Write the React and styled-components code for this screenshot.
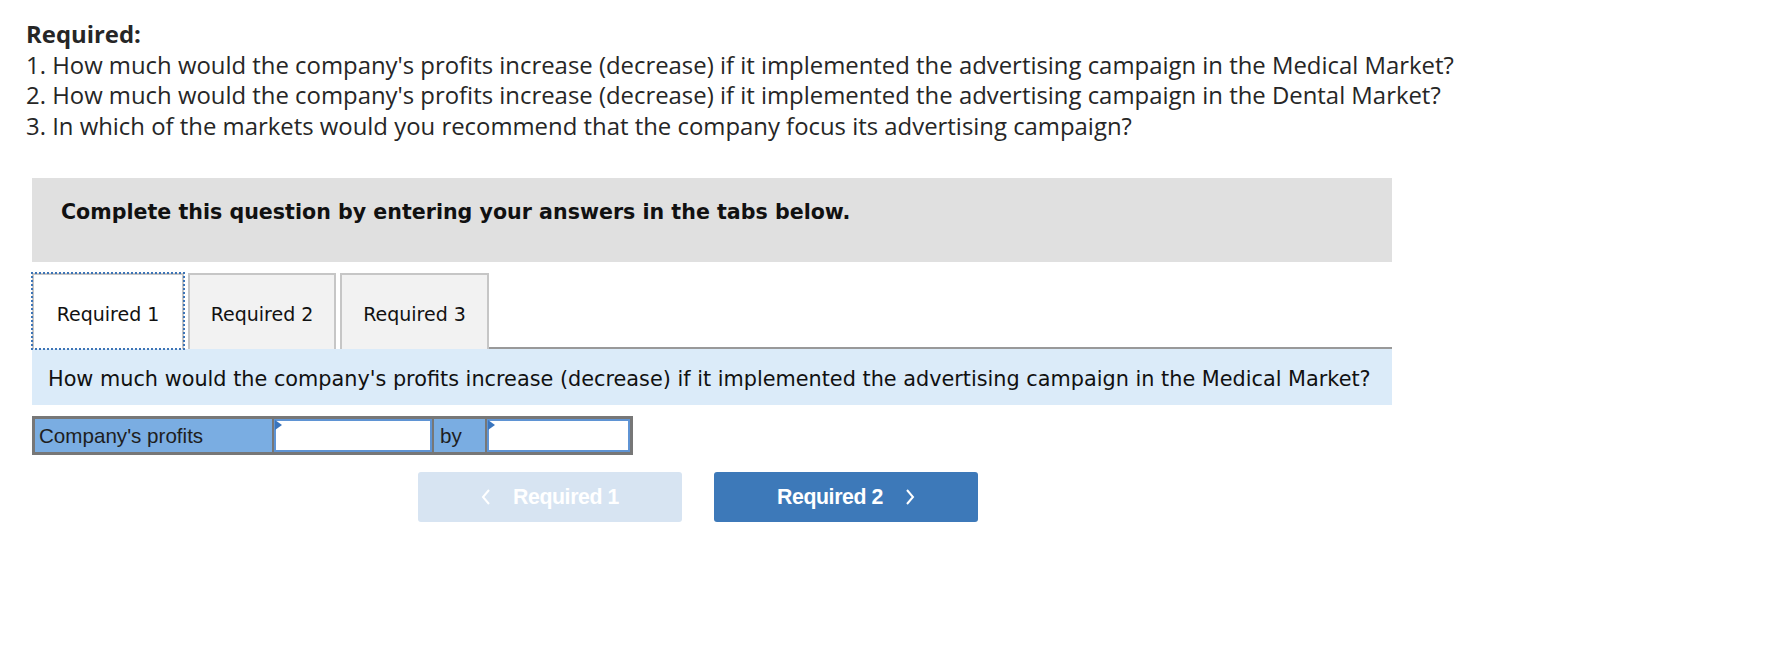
import React from 'react';
import styled, { createGlobalStyle } from 'styled-components';

const GlobalStyle = createGlobalStyle`
  body {
    margin: 0;
    background: #fff;
    color: #222;
  }
`;

const Page = styled.div`
  padding: 19px 0 40px 26px;
`;

const Instructions = styled.div`
  font-family: 'Open Sans', 'Noto Sans', sans-serif;
  font-size: 23.9px;
  line-height: 30.5px;
  color: #262626;
`;

const Title = styled.div`
  font-weight: 700;
`;

const Panel = styled.div`
  width: 1360px;
  margin: 37px 0 0 6px;
`;

const Banner = styled.div`
  background: #e0e0e0;
  height: 84px;
  box-sizing: border-box;
  padding: 22px 29px 0;
  font-family: 'DejaVu Sans', Verdana, sans-serif;
  font-weight: 700;
  font-size: 20.6px;
  line-height: 25px;
  color: #111;
`;

const TabStrip = styled.div`
  display: flex;
  align-items: stretch;
  gap: 4px;
  margin-top: 11px;
  height: 76px;
`;

const Tab = styled.button`
  box-sizing: border-box;
  width: ${(p) => p.$w}px;
  height: 76px;
  padding: 4px 0 0;
  margin: 0;
  border: 2px solid #c6c6c6;
  border-bottom: none;
  background: ${(p) => (p.$active ? '#fff' : '#f2f2f2')};
  outline: ${(p) => (p.$active ? '2px dotted #3d74b6' : 'none')};
  outline-offset: -1px;
  font-family: 'DejaVu Sans', Verdana, sans-serif;
  font-size: 19px;
  color: #111;
  display: flex;
  align-items: center;
  justify-content: center;
  cursor: pointer;
`;

const TabFiller = styled.div`
  flex: 1;
  border-bottom: 2px solid #999;
  margin-left: -4px;
`;

const QuestionBar = styled.div`
  background: #dbebf9;
  height: 56px;
  box-sizing: border-box;
  padding: 18px 16px 0;
  font-family: 'DejaVu Sans', Verdana, sans-serif;
  font-size: 20.8px;
  line-height: 25px;
  color: #111;
`;

const AnswerRow = styled.div`
  display: inline-flex;
  gap: 2px;
  margin-top: 11px;
  border: 3px solid #777;
  background: #777;
  height: 33px;
`;

const LabelCell = styled.div`
  width: ${(p) => p.$w}px;
  box-sizing: border-box;
  background: #7aade2;
  padding-left: ${(p) => p.$pad}px;
  font-family: 'Liberation Sans', Arial, sans-serif;
  font-size: 20.6px;
  line-height: 33px;
  color: #1e1e1e;
`;

const InputWrap = styled.div`
  position: relative;
  width: ${(p) => p.$w}px;
  box-sizing: border-box;
  background: #fff;
  border: 2px solid #5f94d4;
  &::before {
    content: '';
    position: absolute;
    left: -1px;
    top: -1px;
    border-left: 7px solid #3a75bd;
    border-top: 5px solid transparent;
    border-bottom: 5px solid transparent;
  }
`;

const Field = styled.input`
  width: 100%;
  height: 100%;
  box-sizing: border-box;
  border: none;
  outline: none;
  background: transparent;
  font: 20px 'Liberation Sans', Arial, sans-serif;
  padding: 0 6px;
`;

const NavRow = styled.div`
  display: flex;
  gap: 32px;
  margin-top: 17px;
  padding-left: 386px;
`;

const NavButton = styled.button`
  width: 264px;
  height: 50px;
  border: none;
  border-radius: 3px;
  background: ${(p) => (p.disabled ? '#d7e4f2' : '#3d79b9')};
  color: #fff;
  font-family: 'Liberation Sans', Arial, sans-serif;
  font-weight: 700;
  font-size: 21.3px;
  letter-spacing: -0.4px;
  display: flex;
  align-items: center;
  justify-content: center;
  gap: 22px;
  cursor: ${(p) => (p.disabled ? 'default' : 'pointer')};
  padding: 0;
  svg {
    flex: none;
  }
`;

const Chevron = ({ dir }) => (
  <svg width="10" height="18" viewBox="0 0 10 18">
    <polyline
      points={dir === 'left' ? '8,2 2,9 8,16' : '2,2 8,9 2,16'}
      fill="none"
      stroke="#fff"
      strokeWidth="2"
    />
  </svg>
);

export default function App() {
  return (
    <>
      <GlobalStyle />
      <Page>
        <Instructions>
          <Title>Required:</Title>
          <div>
            1. How much would the company's profits increase (decrease) if it
            implemented the advertising campaign in the Medical Market?
          </div>
          <div>
            2. How much would the company's profits increase (decrease) if it
            implemented the advertising campaign in the Dental Market?
          </div>
          <div>
            3. In which of the markets would you recommend that the company
            focus its advertising campaign?
          </div>
        </Instructions>

        <Panel>
          <Banner>
            Complete this question by entering your answers in the tabs below.
          </Banner>

          <TabStrip>
            <Tab $active $w={152}>
              Required 1
            </Tab>
            <Tab $w={148}>Required 2</Tab>
            <Tab $w={149}>Required 3</Tab>
            <TabFiller />
          </TabStrip>

          <QuestionBar>
            How much would the company's profits increase (decrease) if it
            implemented the advertising campaign in the Medical Market?
          </QuestionBar>

          <AnswerRow>
            <LabelCell $w={237} $pad={4}>
              Company's profits
            </LabelCell>
            <InputWrap $w={158}>
              <Field type="text" />
            </InputWrap>
            <LabelCell $w={51} $pad={6}>
              by
            </LabelCell>
            <InputWrap $w={143}>
              <Field type="text" />
            </InputWrap>
          </AnswerRow>

          <NavRow>
            <NavButton disabled>
              <Chevron dir="left" />
              Required 1
            </NavButton>
            <NavButton>
              Required 2
              <Chevron dir="right" />
            </NavButton>
          </NavRow>
        </Panel>
      </Page>
    </>
  );
}
